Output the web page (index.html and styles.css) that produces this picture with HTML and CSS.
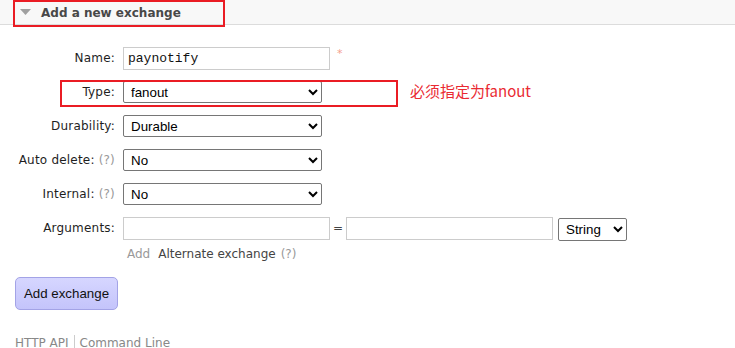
FILE: index.html
```html
<!DOCTYPE html>
<html>
<head>
<meta charset="utf-8">
<link rel="stylesheet" href="styles.css">
</head>
<body>
<div class="section-header">
  <svg class="tri" width="11" height="6" viewBox="0 0 11 6"><path d="M0 0H11L5.5 6Z" fill="#a0a0a0"/></svg>
  <h2 class="title">Add a new exchange</h2>
  <div class="mark mark-head"></div>
</div>
<form class="form">
  <div class="row">
    <label class="lbl">Name:</label>
    <div class="val"><input class="text" type="text" value="paynotify"><span class="req">*</span></div>
  </div>
  <div class="row row-type">
    <label class="lbl">Type:</label>
    <div class="val"><select class="sel"><option>fanout</option></select></div>
    <div class="mark mark-type"></div>
    <span class="note">必须指定为fanout</span>
  </div>
  <div class="row">
    <label class="lbl">Durability:</label>
    <div class="val"><select class="sel"><option>Durable</option></select></div>
  </div>
  <div class="row">
    <label class="lbl">Auto delete: <span class="help">(?)</span></label>
    <div class="val"><select class="sel"><option>No</option></select></div>
  </div>
  <div class="row">
    <label class="lbl">Internal: <span class="help">(?)</span></label>
    <div class="val"><select class="sel"><option>No</option></select></div>
  </div>
  <div class="row">
    <label class="lbl">Arguments:</label>
    <div class="val">
      <input class="text" type="text"><span class="eq">=</span><input class="text" type="text"><select class="sel sel-small"><option>String</option></select>
    </div>
  </div>
  <div class="row-add">
    <span class="add">Add</span><span class="alt">Alternate exchange</span><span class="help">(?)</span>
  </div>
  <div class="actions">
    <button class="btn" type="button">Add exchange</button>
  </div>
</form>
<div class="footer">
  <span class="flink">HTTP API</span><span class="sep"></span><span class="flink">Command Line</span>
</div>
</body>
</html>
```

FILE: styles.css
```css
html, body {
  margin: 0;
  padding: 0;
  background: #fff;
}
body {
  font-family: "DejaVu Sans", Verdana, sans-serif;
  font-size: 12px;
  color: #1e1e1e;
  width: 735px;
  height: 348px;
  overflow: hidden;
}
.section-header {
  position: relative;
  height: 25px;
  background: #f8f8f8;
  border-bottom: 1px solid #dcdcdc;
  display: flex;
  align-items: center;
  padding-left: 20px;
  box-sizing: border-box;
}
.tri {
  margin-right: 10px;
}
.title {
  margin: 0;
  font-size: 12px;
  font-weight: bold;
  color: #484848;
  padding-top: 1px;
}
.mark {
  position: absolute;
  border: 2px solid #ea1c24;
  box-sizing: border-box;
}
.mark-head {
  left: 13px;
  top: 0;
  width: 212px;
  height: 27px;
}
.form {
  margin: 0;
  padding-top: 16px;
}
.row {
  position: relative;
  height: 34px;
  display: flex;
  align-items: center;
}
.lbl {
  width: 115px;
  text-align: right;
  padding-right: 8px;
  flex: none;
  letter-spacing: 0.2px;
}
.help {
  color: #999;
}
.val {
  display: flex;
  align-items: center;
}
.text {
  width: 207px;
  height: 23px;
  box-sizing: border-box;
  border: 1px solid #ccc;
  padding: 1px 4px;
  margin: 0;
  font-family: "Liberation Mono", "Courier New", monospace;
  font-size: 13px;
  color: #111;
  outline: none;
}
.req {
  color: #f4a08c;
  margin-left: 7px;
  font-size: 11px;
  align-self: flex-start;
  margin-top: 0;
}
.sel {
  width: 199px;
  height: 22px;
  margin: 0;
  box-sizing: border-box;
  font-family: "Liberation Sans", Arial, sans-serif;
  font-size: 13.33px;
  color: #000;
  background: #fff;
  border: 1px solid #767676;
  border-radius: 2px;
  padding: 0 3px;
}
.sel-small {
  width: 69px;
  height: 23px;
  margin-left: 5px;
  margin-top: 2px;
}
.eq {
  width: 16px;
  text-align: center;
  color: #444;
}
.mark-type {
  left: 60px;
  top: 5px;
  width: 338px;
  height: 27px;
}
.note {
  position: absolute;
  left: 410px;
  top: 5px;
  color: #ea2a32;
  font-family: "Noto Sans CJK SC", sans-serif;
  font-size: 15px;
}
.row-add {
  padding-left: 127px;
  height: 18px;
  line-height: 18px;
  margin-top: 0;
}
.add {
  color: #999;
  margin-right: 8px;
}
.alt {
  color: #444;
  margin-right: 5px;
}
.actions {
  padding: 14px 0 0 15px;
}
.btn {
  width: 103px;
  height: 33px;
  box-sizing: border-box;
  background: linear-gradient(#d6d6ff, #c4c4fb);
  border: 1px solid #a3a3e6;
  border-radius: 5px;
  font-family: "Liberation Sans", Arial, sans-serif;
  font-size: 13.33px;
  color: #111;
  padding: 0;
  margin: 0;
}
.footer {
  display: flex;
  align-items: center;
  padding-left: 15px;
  margin-top: 25px;
  color: #888;
}
.sep {
  width: 1px;
  height: 15px;
  background: #ccc;
  margin: 0 5px;
}
```
